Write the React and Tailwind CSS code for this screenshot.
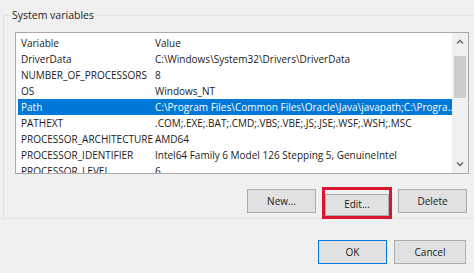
const rows = [
  ['DriverData', 'C:\\Windows\\System32\\Drivers\\DriverData'],
  ['NUMBER_OF_PROCESSORS', '8'],
  ['OS', 'Windows_NT'],
  ['Path', 'C:\\Program Files\\Common Files\\Oracle\\Java\\javapath;C:\\Progra...'],
  ['PATHEXT', '.COM;.EXE;.BAT;.CMD;.VBS;.VBE;.JS;.JSE;.WSF;.WSH;.MSC'],
  ['PROCESSOR_ARCHITECTURE', 'AMD64'],
  ['PROCESSOR_IDENTIFIER', 'Intel64 Family 6 Model 126 Stepping 5, GenuineIntel'],
  ['PROCESSOR_LEVEL', '6'],
]

function Btn({ children, className = '' }) {
  return (
    <button className={'h-[24px] w-[69px] bg-[#e1e1e1] border border-[#adadad] text-[10px] text-[#1a1a1a] ' + className}>
      {children}
    </button>
  )
}

export default function App() {
  return (
    <div
      className="w-[474px] h-[273px] bg-[#f0f0f0] overflow-hidden flex flex-col"
      style={{ fontFamily: '"Open Sans", "Noto Sans", sans-serif' }}
    >
      <fieldset className="mx-[3px] mt-[8px] h-[211px] border border-[#e3e3e3] px-[11px] pt-[10px] flex flex-col">
        <legend className="ml-[-4px] px-[1px] text-[10.5px] text-[#1a1a1a] leading-[14px]">System variables</legend>
        <div className="h-[142px] w-[454px] border border-[#a9a9a9] bg-white flex">
          <div className="flex-1 pl-[2px] pt-[2px] overflow-hidden text-[10px] leading-[16px] text-[#1a1a1a]">
            <div className="flex h-[16px]">
              <span className="w-[137px] pl-[3px]">Variable</span>
              <span>Value</span>
            </div>
            {rows.map(([k, v]) => {
              const sel = k === 'Path'
              return (
                <div key={k} className={'flex h-[16px] whitespace-nowrap ' + (sel ? 'bg-[#0078d7] text-white' : '')}>
                  <span className="w-[137px] pl-[3px] shrink-0">{k}</span>
                  <span>{v}</span>
                </div>
              )
            })}
          </div>
          <div className="w-[16px] bg-[#f0f0f0] flex flex-col items-center">
            <svg width="8" height="5" viewBox="0 0 8 5" className="mt-[6px]">
              <path d="M1 4.5 L4 1.5 L7 4.5" fill="none" stroke="#606060" strokeWidth="1.3" />
            </svg>
            <div className="mt-[12px] w-[12px] h-[42px] bg-[#cdcdcd]" />
            <div className="flex-1" />
            <svg width="8" height="5" viewBox="0 0 8 5" className="mb-[6px]">
              <path d="M1 0.5 L4 3.5 L7 0.5" fill="none" stroke="#606060" strokeWidth="1.3" />
            </svg>
          </div>
        </div>
        <div className="mt-[15px] flex justify-end gap-[6px] pr-[2px]">
          <Btn>New...</Btn>
          <div className="-my-[2px] border-[3px] border-[#d7172f] p-0">
            <button className="h-[22px] w-[64px] bg-[#e1e1e1] border border-[#adadad] text-[10px] text-[#1a1a1a]">Edit...</button>
          </div>
          <Btn>Delete</Btn>
        </div>
      </fieldset>
      <div className="mt-[21px] flex justify-end gap-[7px] pr-[8px]">
        <Btn className="!border-[#0078d7]">OK</Btn>
        <Btn className="w-[72px]">Cancel</Btn>
      </div>
    </div>
  )
}
